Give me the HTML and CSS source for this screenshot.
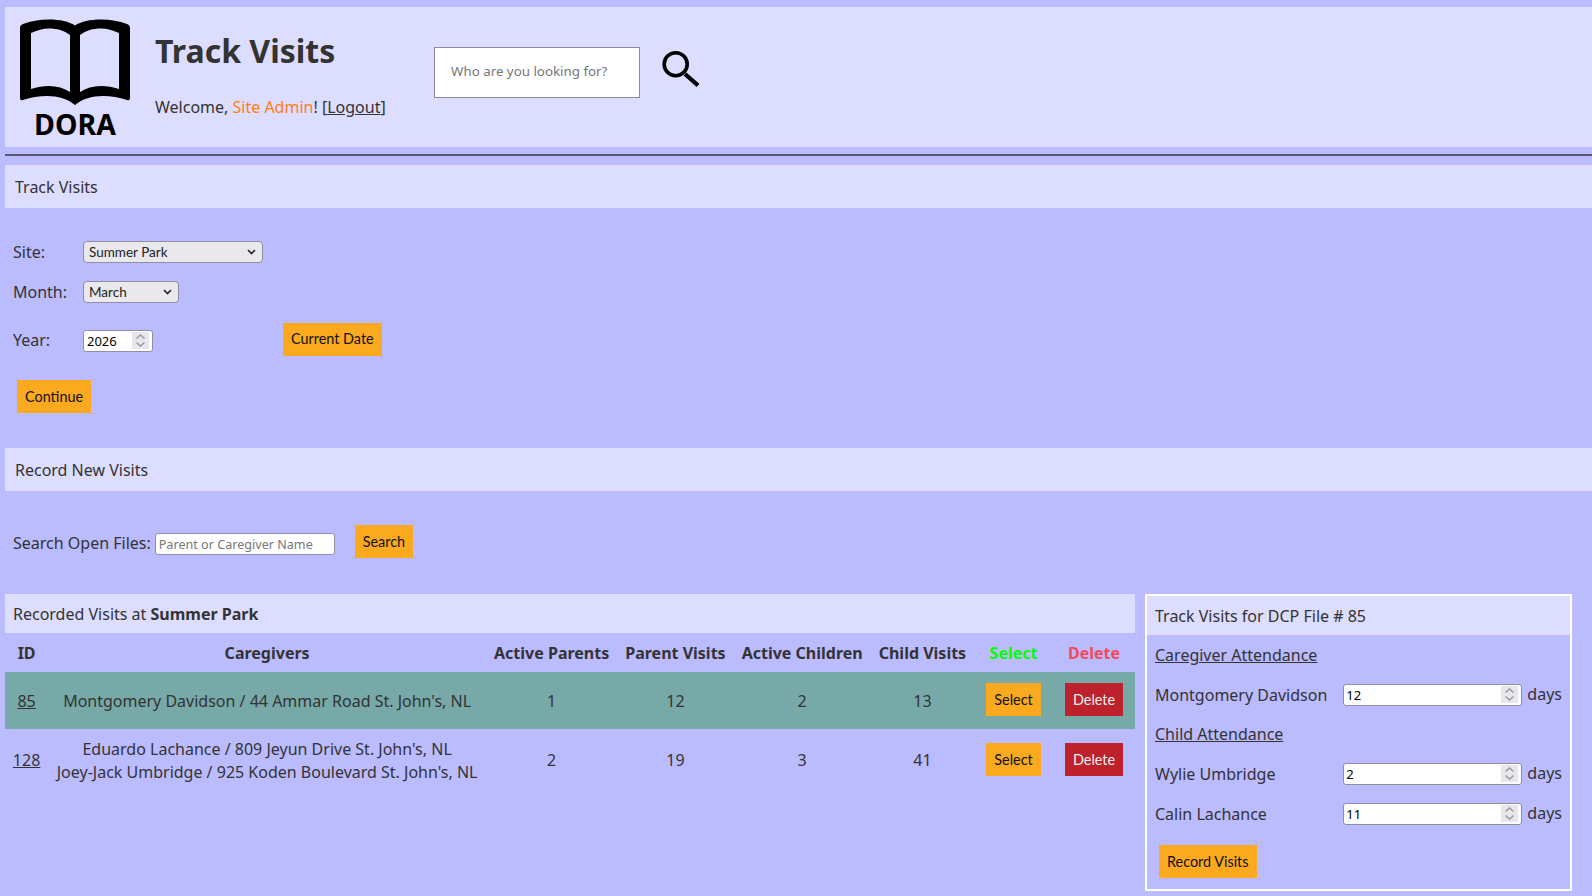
FILE: index.html
```html
<!DOCTYPE html>
<html lang="en">
<head>
    <meta charset="UTF-8">
    <title>Track Visits</title>
    <link rel="stylesheet" href="styles.css">
</head>
<body>
    <div class="header">
        <div class="logo">
            <svg class="book" viewBox="0 0 112 88" width="112" height="88">
                <path fill-rule="evenodd" d="M1 10Q1 7 4 6C12 3 20 1.500 30 1.500C41 1.500 50 3.500 56 7.500C62 3.500 71 1.500 82 1.500C92 1.500 100 3 108 6Q111 7 111 10V80Q111 83 108 82C100 79.500 92 78 84 78C73 78 63 81 56 87C49 81 39 78 28 78C20 78 12 79.500 4 82Q1 83 1 80ZM12 15V71C18 69 24 68 30 68C38 68 45 70 51 74V17C45 12.500 38 10.500 30 10.500C24 10.500 18 12.500 12 15ZM100 15V71C94 69 88 68 82 68C74 68 67 70 61 74V17C67 12.500 74 10.500 82 10.500C88 10.500 94 12.500 100 15Z"/>
            </svg>
            <div class="logo-name">DORA</div>
        </div>
        <div class="title-block">
            <h1>Track Visits</h1>
            <p>Welcome, <span class="user">Site Admin</span>! [<a href="#">Logout</a>]</p>
        </div>
        <input class="big-search" type="text" placeholder="Who are you looking for?">
        <svg class="glass" viewBox="0 0 38 38" width="38" height="38">
            <circle cx="14.700" cy="14.200" r="11.500" fill="none" stroke="#000" stroke-width="3.600"/>
            <path d="M24 24L37 35.500" fill="none" stroke="#000" stroke-width="4.300"/>
        </svg>
    </div>
    <hr class="rule">

    <div class="bar">Track Visits</div>
    <div class="date-form">
        <div class="row site-row">
            <label>Site:</label>
            <select class="site"><option>Summer Park</option></select>
        </div>
        <div class="row month-row">
            <label>Month:</label>
            <select class="month"><option>March</option></select>
        </div>
        <div class="row year-row">
            <label>Year:</label>
            <input class="year" type="number" value="2026">
            <button class="btn current">Current Date</button>
        </div>
        <button class="btn continue">Continue</button>
    </div>

    <div class="bar">Record New Visits</div>
    <div class="search-form">
        <label>Search Open Files:</label>
        <input class="name" type="text" placeholder="Parent or Caregiver Name">
        <button class="btn">Search</button>
    </div>

    <div class="bottom">
        <div class="visits">
            <div class="visits-title">Recorded Visits at <b>Summer Park</b></div>
            <table>
                <tr>
                    <th>ID</th>
                    <th>Caregivers</th>
                    <th>Active Parents</th>
                    <th>Parent Visits</th>
                    <th>Active Children</th>
                    <th>Child Visits</th>
                    <th class="green">Select</th>
                    <th class="red">Delete</th>
                </tr>
                <tr class="picked">
                    <td><a href="#">85</a></td>
                    <td>Montgomery Davidson / 44 Ammar Road St. John's, NL</td>
                    <td>1</td>
                    <td>12</td>
                    <td>2</td>
                    <td>13</td>
                    <td><button class="btn">Select</button></td>
                    <td><button class="btn del">Delete</button></td>
                </tr>
                <tr>
                    <td><a href="#">128</a></td>
                    <td>Eduardo Lachance / 809 Jeyun Drive St. John's, NL<br>Joey-Jack Umbridge / 925 Koden Boulevard St. John's, NL</td>
                    <td>2</td>
                    <td>19</td>
                    <td>3</td>
                    <td>41</td>
                    <td><button class="btn">Select</button></td>
                    <td><button class="btn del">Delete</button></td>
                </tr>
            </table>
        </div>

        <div class="panel">
            <div class="panel-head">Track Visits for DCP File # 85</div>
            <div class="panel-body">
                <div class="line"><u>Caregiver Attendance</u></div>
                <div class="line">
                    <label>Montgomery Davidson</label>
                    <input class="days" type="number" value="12"> <span>days</span>
                </div>
                <div class="line"><u>Child Attendance</u></div>
                <div class="line">
                    <label>Wylie Umbridge</label>
                    <input class="days" type="number" value="2"> <span>days</span>
                </div>
                <div class="line">
                    <label>Calin Lachance</label>
                    <input class="days" type="number" value="11"> <span>days</span>
                </div>
                <button class="btn record">Record Visits</button>
            </div>
        </div>
    </div>
</body>
</html>
```

FILE: styles.css
```css
body {
    margin: 7px 0 0 5px;
    background: #bbf;
    color: #333;
    font-family: "Noto Sans", sans-serif;
    font-size: 16px;
}

a {
    color: inherit;
}

.header {
    display: flex;
    height: 140px;
    background: #ddf;
}

.logo {
    width: 150px;
    padding: 11px 0 0 14px;
    box-sizing: border-box;
}

.book {
    display: block;
}

.logo-name {
    width: 112px;
    font-size: 28.500px;
    font-weight: 700;
    line-height: 36px;
    color: #000;
    text-align: center;
}

.title-block {
    width: 279px;
}

h1 {
    margin: 22px 0 0;
    font-size: 32px;
    line-height: 44px;
}

p {
    margin: 22px 0 0;
    font-size: 16px;
    line-height: 24px;
}

.user {
    color: #ff7f0f;
}

.big-search {
    width: 206px;
    height: 51px;
    margin: 40px 21px 0 0;
    padding: 0 16px 3px;
    box-sizing: border-box;
    border: 1px solid #8a8aa0;
    font-family: "Noto Sans", sans-serif;
    font-size: 13.330px;
}

.glass {
    margin-top: 43px;
}

.rule {
    height: 2px;
    margin: 7px 0 9px;
    border: 0;
    background: #5a5a6a;
}

.bar {
    height: 43px;
    padding: 1px 0 0 10px;
    box-sizing: border-box;
    background: #ddf;
    line-height: 43px;
}

.date-form {
    height: 240px;
    padding: 33px 0 0 8px;
    box-sizing: border-box;
}

.row {
    display: flex;
    align-items: center;
}

.row label {
    width: 70px;
}

.site-row {
    height: 22px;
}

.month-row {
    height: 22px;
    margin-top: 18px;
}

.year-row {
    height: 33px;
    margin-top: 20px;
}

select,
.year,
.days,
.name {
    height: 22px;
    padding: 0 1px;
    box-sizing: border-box;
    border: 1px solid #8f8f9d;
    border-radius: 3px;
    font-family: "Noto Sans", sans-serif;
    font-size: 13px;
}

select {
    padding-left: 5px;
    border-radius: 4px;
    appearance: none;
    background: #e9e9ed url("data:image/svg+xml,%3Csvg xmlns='http://www.w3.org/2000/svg' width='9' height='6'%3E%3Cpath d='M1 1L4.500 4.500L8 1' fill='none' stroke='%23222' stroke-width='1.600'/%3E%3C/svg%3E") no-repeat right 6px center;
    color: #222;
    font-family: "Lato", sans-serif;
    font-size: 13.500px;
}

input::-webkit-inner-spin-button {
    width: 17px;
    height: 17px;
    margin-right: 2px;
    appearance: none;
    opacity: 1;
    background: #e6e6ee url("data:image/svg+xml,%3Csvg xmlns='http://www.w3.org/2000/svg' width='17' height='17'%3E%3Cpath d='M4.500 6.500L8.500 3L12.500 6.500M4.500 10.500L8.500 14L12.500 10.500' fill='none' stroke='%23999' stroke-width='1.400'/%3E%3C/svg%3E") no-repeat center;
}

.site {
    width: 180px;
}

.month {
    width: 96px;
}

.year {
    width: 70px;
    margin-top: 2px;
    padding-left: 3px;
}

.btn {
    height: 33px;
    margin: 4px;
    padding: 0 8px;
    border: 0;
    background: #fbaa20;
    color: #111;
    font-family: "Lato", sans-serif;
    font-size: 14.400px;
}

.current {
    margin-left: 130px;
    padding-bottom: 2px;
}

.continue {
    display: block;
    margin: 24px 0 0 4px;
}

.search-form {
    display: flex;
    align-items: center;
    height: 103px;
    padding-left: 8px;
}

.name {
    width: 180px;
    margin: 2px 16px 0 4px;
    padding-left: 3px;
}

.name::placeholder,
.big-search::placeholder {
    color: #777;
}

.name::placeholder {
    font-size: 12.600px;
}

.search-form .btn {
    margin-bottom: 7px;
}

.bottom {
    display: flex;
    align-items: flex-start;
}

.visits {
    width: 1130px;
    margin-right: 10px;
}

.visits-title {
    height: 39px;
    padding-left: 8px;
    background: #ddf;
    line-height: 40px;
}

table {
    width: 100%;
    border-collapse: collapse;
}

th,
td {
    padding: 0 7.800px;
    white-space: nowrap;
    text-align: center;
}

th {
    height: 39px;
}

td {
    height: 57px;
    padding-top: 2px;
    box-sizing: border-box;
    line-height: 23.500px;
}

tr:last-child td {
    height: 63px;
    padding-top: 1px;
}

td .btn {
    min-width: 55px;
    margin: 1px 4px 5px;
    vertical-align: middle;
}

.picked {
    background: #77a9a9;
}

.green {
    color: #0f0;
}

.red {
    color: #f44a5a;
}

.del {
    background: #bd212b;
    color: #eee;
}

.panel {
    width: 427px;
    height: 297px;
    box-sizing: border-box;
    border: 2px solid #fff;
}

.panel-head {
    height: 39px;
    padding-left: 8px;
    background: #ddf;
    line-height: 40px;
}

.panel-body {
    padding: 0.400px 8px 0;
}

.line {
    display: flex;
    align-items: center;
    height: 39.600px;
}

.line label {
    width: 189px;
}

.line span {
    margin-top: -2px;
}

.days {
    width: 179px;
    margin-right: 5px;
    padding-left: 2px;
}

.record {
    margin: 12px 0 0 4px;
}
```
